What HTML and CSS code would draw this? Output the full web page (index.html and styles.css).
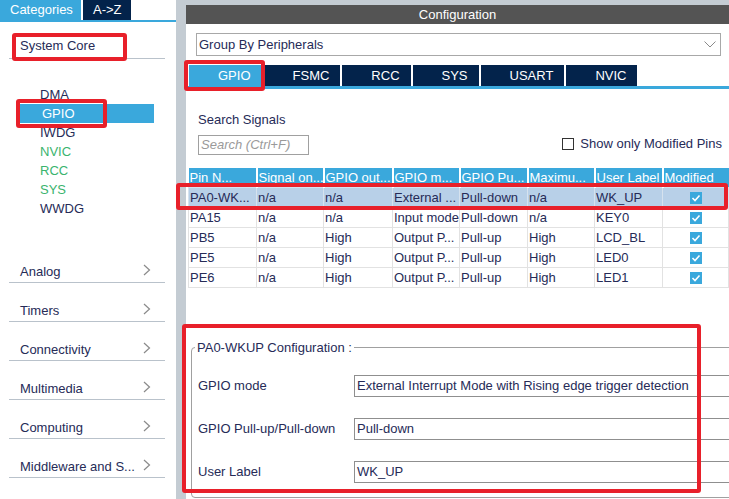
FILE: index.html
```html
<!DOCTYPE html>
<html>
<head>
<meta charset="utf-8">
<link rel="stylesheet" href="styles.css">
</head>
<body>
<div class="app">
  <aside class="left">
    <div class="ltabs">
      <span class="ltab cat">Categories</span>
      <span class="ltab az">A-&gt;Z</span>
    </div>
    <div class="group">System Core</div>
    <ul class="items">
      <li>DMA</li>
      <li class="sel">GPIO</li>
      <li>IWDG</li>
      <li class="ok">NVIC</li>
      <li class="ok">RCC</li>
      <li class="ok">SYS</li>
      <li>WWDG</li>
    </ul>
    <div class="cats">
      <div class="cat-row"><span>Analog</span><svg class="chev" width="8" height="12" viewBox="0 0 8 12"><polyline points="1,1 6.5,6 1,11" fill="none" stroke="#8a8a8a" stroke-width="1.2"/></svg></div>
      <div class="cat-row"><span>Timers</span><svg class="chev" width="8" height="12" viewBox="0 0 8 12"><polyline points="1,1 6.5,6 1,11" fill="none" stroke="#8a8a8a" stroke-width="1.2"/></svg></div>
      <div class="cat-row"><span>Connectivity</span><svg class="chev" width="8" height="12" viewBox="0 0 8 12"><polyline points="1,1 6.5,6 1,11" fill="none" stroke="#8a8a8a" stroke-width="1.2"/></svg></div>
      <div class="cat-row"><span>Multimedia</span><svg class="chev" width="8" height="12" viewBox="0 0 8 12"><polyline points="1,1 6.5,6 1,11" fill="none" stroke="#8a8a8a" stroke-width="1.2"/></svg></div>
      <div class="cat-row"><span>Computing</span><svg class="chev" width="8" height="12" viewBox="0 0 8 12"><polyline points="1,1 6.5,6 1,11" fill="none" stroke="#8a8a8a" stroke-width="1.2"/></svg></div>
      <div class="cat-row"><span>Middleware and S...</span><svg class="chev" width="8" height="12" viewBox="0 0 8 12"><polyline points="1,1 6.5,6 1,11" fill="none" stroke="#8a8a8a" stroke-width="1.2"/></svg></div>
    </div>
  </aside>
  <div class="divider"></div>
  <main class="right">
    <div class="title">Configuration</div>
    <div class="select">
      <span>Group By Peripherals</span>
      <svg width="12" height="7" viewBox="0 0 12 7"><polyline points="0.5,0.5 6,6 11.5,0.5" fill="none" stroke="#8a8a8a" stroke-width="1"/></svg>
    </div>
    <div class="tabs">
      <span class="tab active">GPIO</span>
      <span class="tab">FSMC</span>
      <span class="tab">RCC</span>
      <span class="tab">SYS</span>
      <span class="tab">USART</span>
      <span class="tab">NVIC</span>
    </div>
    <div class="search">
      <div class="search-left">
        <div class="search-label">Search Signals</div>
        <div class="search-box">Search (Ctrl+F)</div>
      </div>
      <label class="only"><span class="cb"></span>Show only Modified Pins</label>
    </div>
    <table class="grid">
      <colgroup>
        <col style="width:68px"><col style="width:67px"><col style="width:69px"><col style="width:67px">
        <col style="width:68px"><col style="width:67px"><col style="width:68px"><col style="width:66px">
      </colgroup>
      <thead>
        <tr><th>Pin N...</th><th>Signal on...</th><th>GPIO out...</th><th>GPIO m...</th><th>GPIO Pu...</th><th>Maximu...</th><th>User Label</th><th>Modified</th></tr>
      </thead>
      <tbody>
        <tr class="selrow"><td>PA0-WK...</td><td>n/a</td><td>n/a</td><td>External ...</td><td>Pull-down</td><td>n/a</td><td>WK_UP</td><td class="mod"><span class="chk"><svg width="12" height="12" viewBox="0 0 12 12"><polyline points="2.5,6 5,8.5 9.5,3.5" fill="none" stroke="#fff" stroke-width="1.6"/></svg></span></td></tr>
        <tr><td>PA15</td><td>n/a</td><td>n/a</td><td>Input mode</td><td>Pull-down</td><td>n/a</td><td>KEY0</td><td class="mod"><span class="chk"><svg width="12" height="12" viewBox="0 0 12 12"><polyline points="2.5,6 5,8.5 9.5,3.5" fill="none" stroke="#fff" stroke-width="1.6"/></svg></span></td></tr>
        <tr><td>PB5</td><td>n/a</td><td>High</td><td>Output P...</td><td>Pull-up</td><td>High</td><td>LCD_BL</td><td class="mod"><span class="chk"><svg width="12" height="12" viewBox="0 0 12 12"><polyline points="2.5,6 5,8.5 9.5,3.5" fill="none" stroke="#fff" stroke-width="1.6"/></svg></span></td></tr>
        <tr><td>PE5</td><td>n/a</td><td>High</td><td>Output P...</td><td>Pull-up</td><td>High</td><td>LED0</td><td class="mod"><span class="chk"><svg width="12" height="12" viewBox="0 0 12 12"><polyline points="2.5,6 5,8.5 9.5,3.5" fill="none" stroke="#fff" stroke-width="1.6"/></svg></span></td></tr>
        <tr><td>PE6</td><td>n/a</td><td>High</td><td>Output P...</td><td>Pull-up</td><td>High</td><td>LED1</td><td class="mod"><span class="chk"><svg width="12" height="12" viewBox="0 0 12 12"><polyline points="2.5,6 5,8.5 9.5,3.5" fill="none" stroke="#fff" stroke-width="1.6"/></svg></span></td></tr>
      </tbody>
    </table>
    <fieldset class="conf">
      <legend>PA0-WKUP Configuration :</legend>
      <div class="frow"><span class="flabel">GPIO mode</span><span class="finput">External Interrupt Mode with Rising edge trigger detection</span></div>
      <div class="frow"><span class="flabel">GPIO Pull-up/Pull-down</span><span class="finput">Pull-down</span></div>
      <div class="frow"><span class="flabel">User Label</span><span class="finput">WK_UP</span></div>
    </fieldset>
  </main>
  <div class="mark m-core"></div>
  <div class="mark m-gpio"></div>
  <div class="mark m-tab"></div>
  <div class="mark m-row"></div>
  <div class="mark m-conf"></div>
</div>
</body>
</html>
```
FILE: styles.css
```css
* { box-sizing: border-box; }
body {
  margin: 0;
  font-family: "Liberation Sans", Arial, sans-serif;
  font-size: 13px;
  color: #262b57;
}
.app {
  position: relative;
  width: 729px;
  height: 499px;
  display: flex;
  overflow: hidden;
  background: #c4ccd3;
}
.left {
  width: 176px;
  flex: none;
  background: #fff;
}
.ltabs {
  display: flex;
  gap: 2px;
  height: 22px;
  border-bottom: 2px solid #3aa8dc;
}
.ltab {
  height: 20px;
  line-height: 20px;
  color: #fff;
  font-size: 13px;
}
.ltab.cat { width: 81px; padding-left: 10px; background: #3aa8dc; }
.ltab.az { width: 48px; padding-left: 10px; background: #03234b; }
.group {
  margin: 16px 11px 0 9px;
  padding: 0 0 4px 11px;
  line-height: 16px;
  border-bottom: 1px solid #b9c2cb;
}
.items {
  list-style: none;
  margin: 26px 0 0 20px;
  padding: 0;
  width: 134px;
}
.items li {
  height: 19px;
  line-height: 19px;
  padding-left: 20px;
}
.items li.sel { background: #3aa8dc; color: #fff; padding-left: 22px; }
.items li.ok { color: #3ab46e; }
.cats { margin: 26px 11px 0 9px; }
.cat-row {
  display: flex;
  align-items: center;
  justify-content: space-between;
  height: 39px;
  padding: 20px 14px 2px 11px;
  line-height: 16px;
  border-bottom: 1px solid #b9c2cb;
}
.cat-row .chev { margin-top: -4px; }
.divider { width: 10px; flex: none; }
.right {
  flex: 1;
  min-width: 0;
  margin-top: 5px;
  background: #fff;
}
.title {
  height: 19px;
  line-height: 19px;
  background: #545454;
  color: #fff;
  text-align: center;
}
.select {
  margin: 9px 8px 0 10px;
  height: 23px;
  border: 1px solid #a8a8a8;
  display: flex;
  align-items: center;
  justify-content: space-between;
  padding: 0 4px 0 2px;
}
.tabs {
  margin-top: 9px;
  display: flex;
  gap: 2px;
  padding-left: 3px;
  border-bottom: 3px solid #3aa8dc;
}
.tab {
  height: 21px;
  line-height: 21px;
  padding: 0 11px 0 29px;
  background: #03234b;
  color: #fff;
}
.tab.active { background: #3aa8dc; }
.search {
  display: flex;
  justify-content: space-between;
  align-items: flex-end;
  margin-top: 23px;
  padding: 0 7px 0 12px;
}
.search-label { line-height: 15px; }
.search-box {
  margin-top: 8px;
  width: 111px;
  height: 20px;
  border: 1px solid #a0a0a0;
  padding-left: 2px;
  line-height: 18px;
  font-style: italic;
  color: #9a9a9a;
}
.only {
  display: flex;
  align-items: center;
  gap: 6px;
  margin-bottom: 4px;
  line-height: 15px;
}
.cb {
  width: 12px;
  height: 12px;
  border: 1px solid #333;
  background: #fff;
}
.grid {
  margin: 13px 0 0 2px;
  width: 540px;
  table-layout: fixed;
  border-collapse: collapse;
}
.grid th {
  height: 19px;
  padding: 0 1px;
  background: #3aa8dc;
  color: #fff;
  font-weight: normal;
  text-align: left;
  white-space: nowrap;
  overflow: hidden;
  border-right: 2px solid #fff;
}
.grid th:last-child { border-right: none; }
.grid td {
  height: 20px;
  padding: 0 0 0 1px;
  border: 1px solid #e2e2e2;
  white-space: nowrap;
  overflow: hidden;
}
.grid tr.selrow td { background: #b8d0e8; border-color: #d6e2ee; }
.grid td.mod { text-align: center; }
.chk {
  display: inline-block;
  width: 12px;
  height: 12px;
  background: #3aa8dc;
  vertical-align: middle;
}
.chk svg { display: block; }
.conf {
  margin: 52px 0 0 5px;
  width: 700px;
  padding: 0 0 14px 0;
  border: 1px solid #a0a0a0;
  border-radius: 4px;
}
.conf legend {
  margin-left: 3px;
  padding: 0 2px;
  line-height: 16px;
}
.frow {
  display: flex;
  align-items: center;
  padding-left: 6px;
  margin-top: 21px;
}
.frow:first-of-type { margin-top: 19px; }
.flabel { width: 156px; flex: none; }
.finput {
  width: 420px;
  height: 22px;
  line-height: 20px;
  padding-left: 2px;
  border: 1px solid #8f8f8f;
  white-space: nowrap;
}
.mark {
  position: absolute;
  border: 4px solid #e8202a;
  border-radius: 3px;
}
.m-core { left: 12px; top: 33px; width: 115px; height: 28px; }
.m-gpio { left: 16px; top: 99px; width: 91px; height: 29px; }
.m-tab { left: 184px; top: 60px; width: 81px; height: 31px; }
.m-row { left: 176px; top: 183px; width: 552px; height: 27px; }
.m-conf { left: 182px; top: 324px; width: 519px; height: 169px; }
```
